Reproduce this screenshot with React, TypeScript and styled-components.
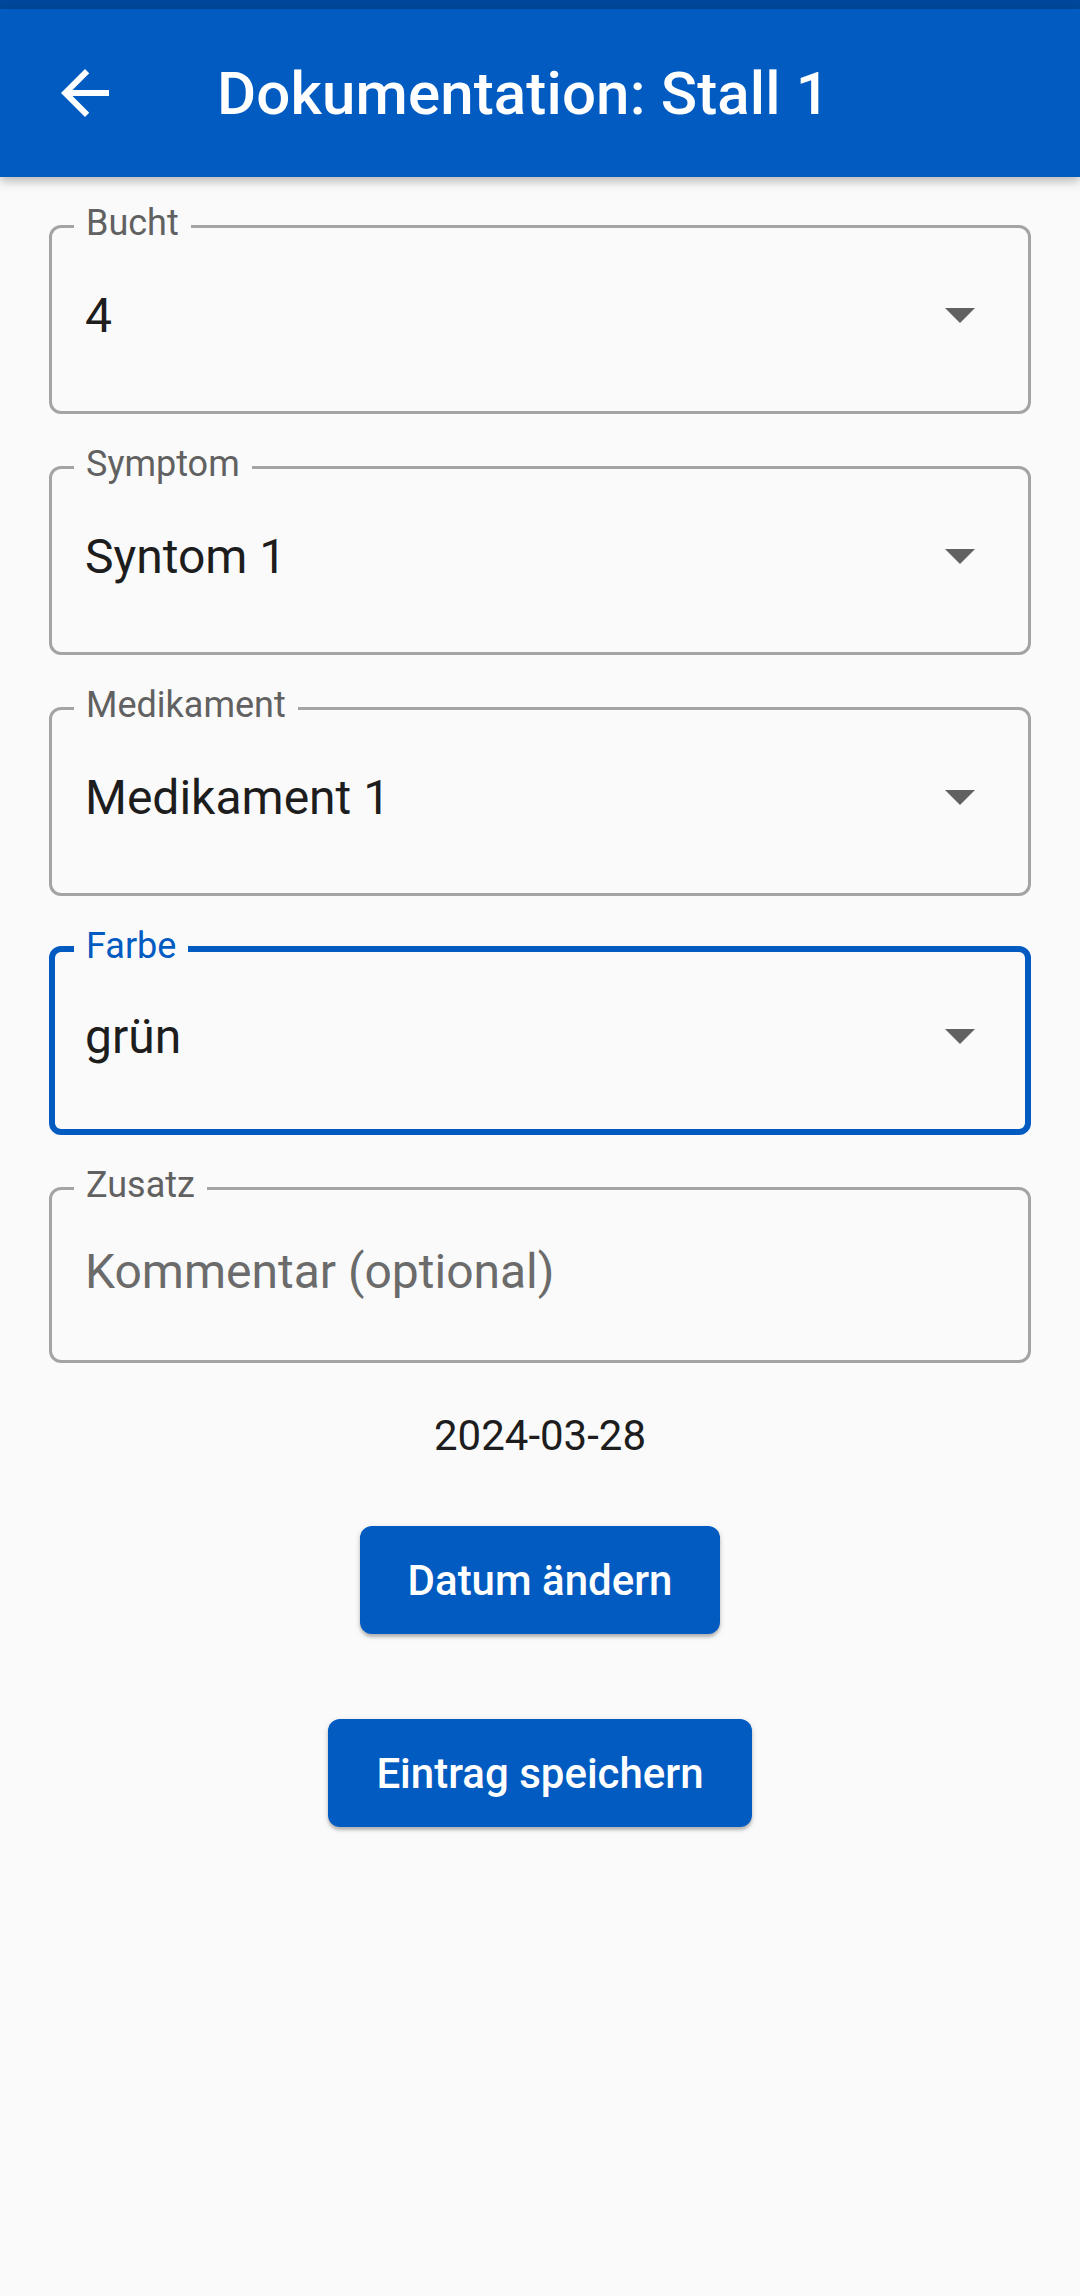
import React from "react";
import styled, { createGlobalStyle } from "styled-components";

//-----------------------STYLE-----------------------//

const GlobalStyle = createGlobalStyle`
  body {
    margin: 0;
    background: #fafafa;
    font-family: Roboto, "Noto Sans", sans-serif;
  }
`;

const PageStyle = styled.div`
  display: flex;
  flex-direction: column;
  min-height: 2296px;
  background: #fafafa;
`;

const StatusBar = styled.div`
  height: 9px;
  background: #00479b;
`;

const AppBar = styled.header`
  display: flex;
  align-items: center;
  height: 168px;
  background: #015bc1;
  box-shadow: 0 4px 10px rgba(0, 0, 0, 0.28);
  position: relative;
  z-index: 1;
`;

const BackButton = styled.button`
  display: flex;
  align-items: center;
  justify-content: center;
  width: 72px;
  height: 72px;
  margin-left: 49px;
  padding: 0;
  border: none;
  background: transparent;
  svg {
    width: 72px;
    height: 72px;
  }
`;

const Title = styled.h1`
  margin: 0 0 0 96px;
  font-size: 60px;
  font-weight: 500;
  letter-spacing: 0.15px;
  color: #ffffff;
`;

const FormStyle = styled.main`
  display: flex;
  flex-direction: column;
  padding: 28px 49px 0;
`;

const FieldList = styled.div`
  display: flex;
  flex-direction: column;
  gap: 32px;
`;

const FieldBox = styled.fieldset<{ $focused?: boolean }>`
  margin: 0;
  padding: 0;
  min-inline-size: 0;
  border: ${(p) => (p.$focused ? "6px solid #015bc1" : "3px solid #a4a4a4")};
  border-radius: 12px;
`;

const Label = styled.legend<{ $focused?: boolean }>`
  margin-left: ${(p) => (p.$focused ? 19 : 22)}px;
  padding: 0 12px 6px;
  font-size: 36px;
  line-height: 36px;
  color: ${(p) => (p.$focused ? "#015bc1" : "#616161")};
`;

const FieldRow = styled.div<{ $focused?: boolean; $h: number; $pb: number }>`
  display: flex;
  align-items: center;
  justify-content: space-between;
  height: ${(p) => p.$h}px;
  padding: 0 ${(p) => (p.$focused ? 50 : 53)}px ${(p) => p.$pb}px
    ${(p) => (p.$focused ? 30 : 33)}px;
`;

const Value = styled.span<{ $hint?: boolean }>`
  font-size: 48px;
  color: ${(p) => (p.$hint ? "#6b6b6b" : "#1d1d1d")};
`;

const DateText = styled.p`
  margin: 48px 0 0;
  text-align: center;
  font-size: 42px;
  color: #1d1d1d;
`;

const ActionButton = styled.button<{ $top: number }>`
  align-self: center;
  height: 108px;
  margin-top: ${(p) => p.$top}px;
  padding: 0 48px;
  border: none;
  border-radius: 12px;
  background: #015bc1;
  color: #ffffff;
  font-family: Roboto, sans-serif;
  font-size: 42px;
  font-weight: 500;
  box-shadow: 0 3px 3px rgba(0, 0, 0, 0.2), 0 2px 6px rgba(0, 0, 0, 0.14);
`;

//-----------------------COMPONENT-----------------------//

const DropArrow = () => (
  <svg width="30" height="15" viewBox="0 0 10 5">
    <path d="M0 0h10L5 5z" fill="#616161" />
  </svg>
);

type FieldProps = {
  label: string;
  value: string;
  focused?: boolean;
  hint?: boolean;
  dropdown?: boolean;
};

const Field = ({ label, value, focused, hint, dropdown = true }: FieldProps) => {
  // row height and bottom padding differ by border width / field type
  const h = dropdown ? (focused ? 132 : 136) : 124;
  const pb = dropdown ? (focused ? 27 : 28) : 27;
  return (
    <FieldBox $focused={focused}>
      <Label $focused={focused}>{label}</Label>
      <FieldRow $focused={focused} $h={h} $pb={pb}>
        <Value $hint={hint}>{value}</Value>
        {dropdown && <DropArrow />}
      </FieldRow>
    </FieldBox>
  );
};

const App = () => {
  return (
    <PageStyle>
      <GlobalStyle />
      <StatusBar />
      <AppBar>
        <BackButton>
          <svg viewBox="0 0 24 24">
            <path
              fill="#ffffff"
              d="M20 11H7.83l5.59-5.59L12 4l-8 8 8 8 1.41-1.41L7.83 13H20v-2z"
            />
          </svg>
        </BackButton>
        <Title>Dokumentation: Stall 1</Title>
      </AppBar>

      <FormStyle>
        <FieldList>
          <Field label="Bucht" value="4" />
          <Field label="Symptom" value="Syntom 1" />
          <Field label="Medikament" value="Medikament 1" />
          <Field label="Farbe" value="grün" focused />
          <Field
            label="Zusatz"
            value="Kommentar (optional)"
            hint
            dropdown={false}
          />
        </FieldList>
        <DateText>2024-03-28</DateText>
        <ActionButton $top={66}>Datum ändern</ActionButton>
        <ActionButton $top={85}>Eintrag speichern</ActionButton>
      </FormStyle>
    </PageStyle>
  );
};

export default App;
